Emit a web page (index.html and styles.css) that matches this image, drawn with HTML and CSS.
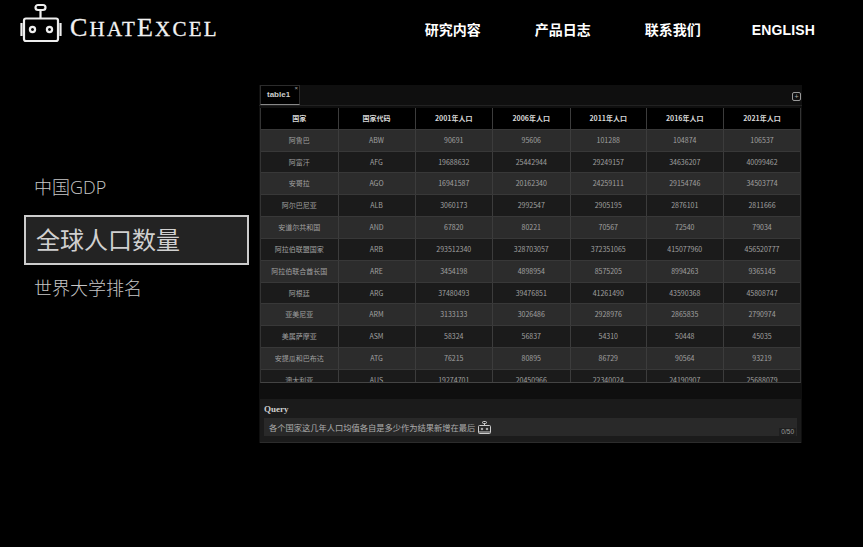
FILE: index.html
```html
<!DOCTYPE html>
<html lang="zh">
<head>
    <meta charset="UTF-8">
    <meta name="viewport" content="width=device-width, initial-scale=1.0">
    <title>ChatExcel</title>
    <link rel="stylesheet" href="styles.css">
</head>
<body>
<header class="top-bar">
    <div class="logo">
        <svg class="logo-icon" width="42" height="40" viewBox="0 0 42 40" fill="none" stroke="#eee" stroke-width="2.2">
            <rect x="15.500" y="2" width="10" height="5" rx="2.500"/>
            <path d="M20.500 7v8"/>
            <rect x="4" y="15.500" width="34" height="22.500" rx="2"/>
            <path d="M1.500 20v13M40.500 20v13"/>
            <circle cx="12.500" cy="26.500" r="2.600"/>
            <circle cx="29.500" cy="26.500" r="2.600"/>
        </svg>
        <span class="logo-text"><span class="logo-cap">C</span>hat<span class="logo-cap">E</span>xcel</span>
    </div>
    <nav class="nav">
        <a class="nav-item">研究内容</a>
        <a class="nav-item">产品日志</a>
        <a class="nav-item">联系我们</a>
        <a class="nav-item nav-en">ENGLISH</a>
    </nav>
</header>

<main class="main">
    <aside class="side-menu">
        <div class="side-item">中国GDP</div>
        <div class="side-item active">全球人口数量</div>
        <div class="side-item">世界大学排名</div>
    </aside>

    <section class="panel">
        <div class="tab-bar">
            <div class="tab">table1<span class="tab-close">×</span></div>
            <div class="tab-add">+</div>
        </div>
        <div class="table-wrap">
            <div class="row head">
                <div>国家</div><div>国家代码</div><div>2001年人口</div><div>2006年人口</div><div>2011年人口</div><div>2016年人口</div><div>2021年人口</div>
            </div>
            <div class="row"><div>阿鲁巴</div><div>ABW</div><div>90691</div><div>95606</div><div>101288</div><div>104874</div><div>106537</div></div>
            <div class="row"><div>阿富汗</div><div>AFG</div><div>19688632</div><div>25442944</div><div>29249157</div><div>34636207</div><div>40099462</div></div>
            <div class="row"><div>安哥拉</div><div>AGO</div><div>16941587</div><div>20162340</div><div>24259111</div><div>29154746</div><div>34503774</div></div>
            <div class="row"><div>阿尔巴尼亚</div><div>ALB</div><div>3060173</div><div>2992547</div><div>2905195</div><div>2876101</div><div>2811666</div></div>
            <div class="row"><div>安道尔共和国</div><div>AND</div><div>67820</div><div>80221</div><div>70567</div><div>72540</div><div>79034</div></div>
            <div class="row"><div>阿拉伯联盟国家</div><div>ARB</div><div>293512340</div><div>328703057</div><div>372351065</div><div>415077960</div><div>456520777</div></div>
            <div class="row"><div>阿拉伯联合酋长国</div><div>ARE</div><div>3454198</div><div>4898954</div><div>8575205</div><div>8994263</div><div>9365145</div></div>
            <div class="row"><div>阿根廷</div><div>ARG</div><div>37480493</div><div>39476851</div><div>41261490</div><div>43590368</div><div>45808747</div></div>
            <div class="row"><div>亚美尼亚</div><div>ARM</div><div>3133133</div><div>3026486</div><div>2928976</div><div>2865835</div><div>2790974</div></div>
            <div class="row"><div>美属萨摩亚</div><div>ASM</div><div>58324</div><div>56837</div><div>54310</div><div>50448</div><div>45035</div></div>
            <div class="row"><div>安提瓜和巴布达</div><div>ATG</div><div>76215</div><div>80895</div><div>86729</div><div>90564</div><div>93219</div></div>
            <div class="row"><div>澳大利亚</div><div>AUS</div><div>19274701</div><div>20450966</div><div>22340024</div><div>24190907</div><div>25688079</div></div>
        </div>
        <div class="query">
            <div class="query-title">Query</div>
            <div class="query-box">
                <span>各个国家这几年人口均值各自是多少作为结果新增在最后</span>
                <svg class="query-icon" width="13" height="13" viewBox="0 0 13 13" fill="none" stroke="#ccc" stroke-width="1">
                    <rect x="4.500" y="0.500" width="4" height="2" rx="1"/>
                    <path d="M6.500 2.500v2"/>
                    <rect x="0.500" y="4.500" width="12" height="8" rx="1"/>
                    <circle cx="4" cy="8" r="0.800"/>
                    <circle cx="9" cy="8" r="0.800"/>
                    <path d="M1 11h11"/>
                </svg>
                <span class="counter">0/50</span>
            </div>
        </div>
    </section>
</main>
</body>
</html>
```

FILE: styles.css
```css
html, body {
    margin: 0;
    padding: 0;
}

body {
    width: 863px;
    height: 547px;
    overflow: hidden;
    background-color: #000;
    color: #fff;
    font-family: "Liberation Sans", "Noto Sans CJK SC", sans-serif;
}

.top-bar {
    display: flex;
    justify-content: space-between;
    align-items: flex-start;
    height: 85px;
    padding: 3px 0 0 20px;
    box-sizing: border-box;
}

.logo {
    display: flex;
    align-items: flex-start;
}

.logo-text {
    margin: 10px 0 0 8px;
    font-family: "Liberation Serif", serif;
    font-size: 21px;
    line-height: 30px;
    text-transform: uppercase;
    letter-spacing: 2.200px;
    -webkit-text-stroke: 0.300px #f2f2f2;
    color: #f2f2f2;
}

.logo-cap {
    font-size: 26px;
}

.nav {
    display: flex;
    gap: 54px;
    margin: 17px 48px 0 0;
}

.nav-item {
    font-size: 14px;
    line-height: 20px;
    font-weight: bold;
    color: #fff;
}

.nav-en {
    margin-left: -3px;
    letter-spacing: 0.150px;
}

.main {
    display: flex;
    align-items: flex-start;
}

.side-menu {
    width: 225px;
    margin: 84px 10px 0 24px;
}

.side-item {
    padding-left: 10px;
    font-family: "Open Sans", "Noto Sans CJK SC", sans-serif;
    font-size: 18px;
    font-weight: 300;
    line-height: 36px;
    color: #c6c6c6;
}

.side-item.active {
    height: 50px;
    margin: 10px 0 5px;
    border: 2px solid #ccc;
    box-sizing: border-box;
    background-color: #232323;
    font-size: 24px;
    font-weight: 400;
    line-height: 45px;
    color: #d0d0d0;
}

.panel {
    width: 543px;
    height: 358px;
    background-color: #0f0f0f;
}

.tab-bar {
    display: flex;
    justify-content: space-between;
    align-items: flex-end;
    height: 21px;
    padding-left: 1px;
    border-bottom: 1px solid #222;
    box-sizing: border-box;
}

.tab {
    position: relative;
    width: 40px;
    height: 20px;
    border: 1px solid #2c2c2c;
    border-bottom: 1px solid #888;
    box-sizing: border-box;
    background-color: #000;
    padding-left: 6px;
    font-size: 8px;
    font-weight: bold;
    line-height: 18px;
    color: #ccc;
}

.tab-close {
    position: absolute;
    top: -2px;
    right: 1px;
    font-size: 6px;
    font-weight: normal;
    line-height: 8px;
    color: #aaa;
}

.tab-add {
    width: 7px;
    height: 7px;
    margin: 0 1px 4px 0;
    border: 1px solid #999;
    border-radius: 2px;
    font-size: 7px;
    line-height: 7px;
    text-align: center;
    color: #aaa;
}

.table-wrap {
    height: 275px;
    margin: 2px 1px 0;
    overflow: hidden;
    border-left: 1px solid #333;
    border-right: 1px solid #333;
    border-bottom: 1px solid #444;
    box-sizing: border-box;
    font-family: "Noto Sans CJK SC", sans-serif;
    font-size: 7px;
    color: #a0a0a0;
}

.row {
    display: grid;
    grid-template-columns: 77.500px 77px 77.500px 77.500px 76.500px 76.500px 77px;
    height: 21.820px;
    background-color: #2c2c2c;
    box-sizing: border-box;
    border-bottom: 1px solid #383838;
}

.row:nth-child(odd) {
    background-color: #1b1b1b;
}

.row div {
    border-right: 1px solid #3c3c3c;
    text-align: center;
    line-height: 20.800px;
}

.row div:last-child {
    border-right: none;
}

.row.head {
    background-color: #000;
    font-weight: bold;
    color: #d8d8d8;
}

.query {
    height: 44px;
    margin: 16px 1px 0;
    padding: 4px 4px 0;
    box-sizing: border-box;
    background-color: #1b1b1b;
    border-bottom: 1px solid #2c2c2c;
}

.query-title {
    font-family: "Liberation Serif", serif;
    font-size: 9px;
    font-weight: bold;
    line-height: 12px;
    color: #cfcfcf;
}

.query-box {
    position: relative;
    display: flex;
    align-items: center;
    gap: 3px;
    height: 18px;
    margin-top: 3px;
    padding-left: 5px;
    background-color: #292929;
    font-family: "Noto Sans CJK SC", sans-serif;
    font-size: 8.250px;
    color: #adadad;
}

.counter {
    position: absolute;
    right: 1px;
    bottom: 0;
    padding: 0 2px;
    background-color: #1f1f1f;
    font-family: "Liberation Sans", sans-serif;
    font-size: 6.500px;
    line-height: 8px;
    color: #999;
}
```
